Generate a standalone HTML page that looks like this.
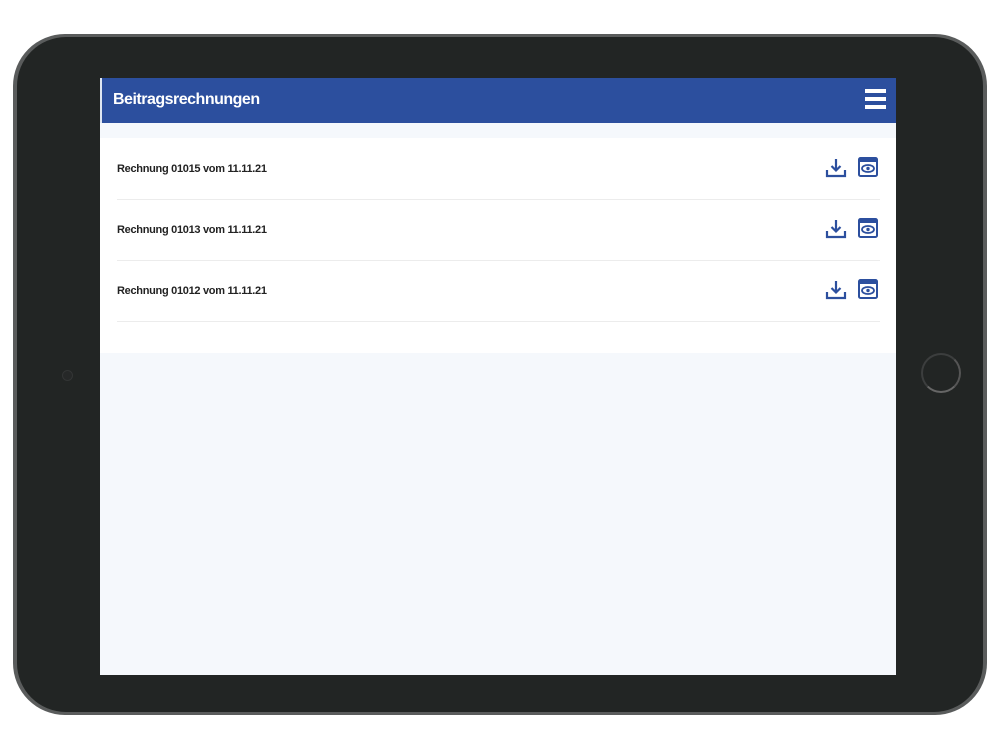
<!DOCTYPE html>
<html><head><meta charset="utf-8"><style>
html,body{margin:0;padding:0;background:#fff;width:1000px;height:750px;overflow:hidden;font-family:"Liberation Sans",sans-serif}
.dev{position:absolute;left:13px;top:34px;width:974px;height:681px;border-radius:52px;background:#5a5c5c}
.dev2{position:absolute;left:17px;top:37px;width:966px;height:675px;border-radius:49px;background:#222524}
.screen{position:absolute;left:100px;top:78px;width:796px;height:597px;background:#f5f8fc}
.hdr{position:absolute;left:0;top:0;width:796px;height:45px;background:#2c4f9e;border-left:2px solid #dfe6f2;box-sizing:border-box}
.hdr h1{margin:0;position:absolute;left:11px;top:13px;color:#fff;font-size:16px;font-weight:bold;letter-spacing:-0.5px}
.menu{position:absolute;right:10px;top:11px;width:21px}
.menu div{height:3.5px;background:#fff;margin-bottom:4.5px}
.card{position:absolute;left:0;top:60px;width:796px;height:215px;background:#fff}
.row{position:absolute;left:17px;width:763px;height:61px;border-bottom:1px solid #ececec}
.row span{position:absolute;left:0;top:25px;font-size:11px;font-weight:bold;color:#222;letter-spacing:-0.3px}
.ic{position:absolute;top:19px}
</style></head><body>
<div class="dev"></div><div class="dev2"></div>
<div style="position:absolute;left:62px;top:370px;width:9px;height:9px;border-radius:50%;border:1px solid #333535;background:#262828"></div>
<div style="position:absolute;left:921px;top:353px;width:40px;height:40px;border-radius:50%;border:2px solid #3c3e3e;border-bottom-color:#666;border-right-color:#555;box-sizing:border-box"></div>
<div class="screen">
<div class="hdr"><h1>Beitragsrechnungen</h1><div class="menu"><div></div><div></div><div></div></div></div>
<div class="card">
<div class="row" style="top:0"><span>Rechnung 01015 vom 11.11.21</span>
<svg class="ic" style="left:708px" width="22" height="22" viewBox="0 0 22 22" fill="none" stroke="#2c4f9e" stroke-width="2.2"><path d="M11 2v11M6.5 9l4.5 4.5L15.5 9M2 13v6h18v-6"/></svg>
<svg class="ic" style="left:741px" width="20" height="20" viewBox="0 0 20 20"><rect x="1" y="1" width="18" height="18" rx="1.5" fill="none" stroke="#2c4f9e" stroke-width="2"/><rect x="1" y="1" width="18" height="4" fill="#2c4f9e"/><ellipse cx="10" cy="11.5" rx="6" ry="3.5" fill="none" stroke="#2c4f9e" stroke-width="1.8"/><circle cx="10" cy="11.5" r="1.7" fill="#2c4f9e"/></svg></div>
<div class="row" style="top:61px"><span>Rechnung 01013 vom 11.11.21</span>
<svg class="ic" style="left:708px" width="22" height="22" viewBox="0 0 22 22" fill="none" stroke="#2c4f9e" stroke-width="2.2"><path d="M11 2v11M6.5 9l4.5 4.5L15.5 9M2 13v6h18v-6"/></svg>
<svg class="ic" style="left:741px" width="20" height="20" viewBox="0 0 20 20"><rect x="1" y="1" width="18" height="18" rx="1.5" fill="none" stroke="#2c4f9e" stroke-width="2"/><rect x="1" y="1" width="18" height="4" fill="#2c4f9e"/><ellipse cx="10" cy="11.5" rx="6" ry="3.5" fill="none" stroke="#2c4f9e" stroke-width="1.8"/><circle cx="10" cy="11.5" r="1.7" fill="#2c4f9e"/></svg></div>
<div class="row" style="top:122px"><span>Rechnung 01012 vom 11.11.21</span>
<svg class="ic" style="left:708px" width="22" height="22" viewBox="0 0 22 22" fill="none" stroke="#2c4f9e" stroke-width="2.2"><path d="M11 2v11M6.5 9l4.5 4.5L15.5 9M2 13v6h18v-6"/></svg>
<svg class="ic" style="left:741px" width="20" height="20" viewBox="0 0 20 20"><rect x="1" y="1" width="18" height="18" rx="1.5" fill="none" stroke="#2c4f9e" stroke-width="2"/><rect x="1" y="1" width="18" height="4" fill="#2c4f9e"/><ellipse cx="10" cy="11.5" rx="6" ry="3.5" fill="none" stroke="#2c4f9e" stroke-width="1.8"/><circle cx="10" cy="11.5" r="1.7" fill="#2c4f9e"/></svg></div>
</div>
</div>
</body></html>
